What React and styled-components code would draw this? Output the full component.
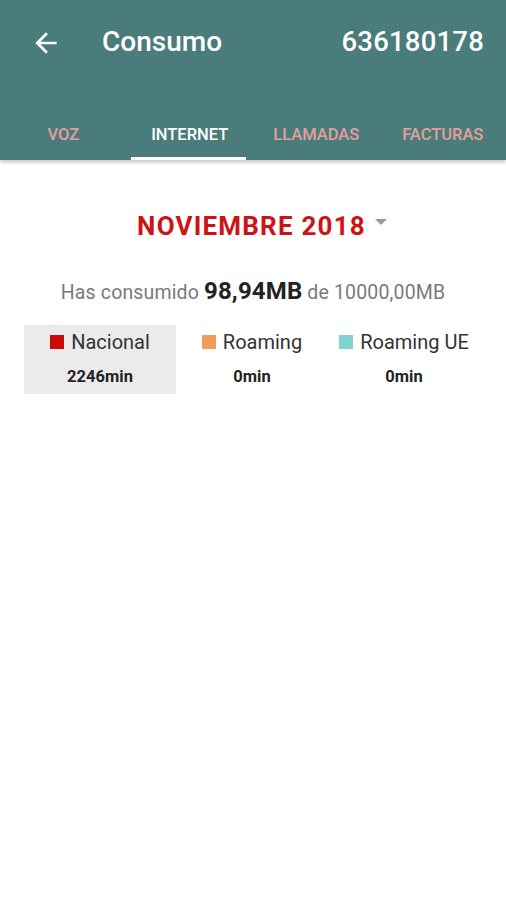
import React from 'react';
import styled, { createGlobalStyle } from 'styled-components';

const GlobalStyle = createGlobalStyle`
  html, body {
    margin: 0;
    padding: 0;
    background: #ffffff;
  }
  body {
    font-family: Roboto, "Noto Sans", "Liberation Sans", sans-serif;
  }
`;

const Screen = styled.div`
  width: 506px;
  min-height: 900px;
  background: #ffffff;
`;

const Header = styled.header`
  background: #4a7c7b;
  box-shadow: 0 2px 4px rgba(0, 0, 0, 0.25);
`;

const Toolbar = styled.div`
  height: 84px;
  display: flex;
  align-items: flex-start;
  padding: 26px 22px 0 30px;
  box-sizing: border-box;
  color: #ffffff;
`;

const BackButton = styled.button`
  width: 32px;
  height: 32px;
  margin-top: 1px;
  padding: 0;
  border: none;
  background: none;
  color: #ffffff;
  display: flex;
`;

const Title = styled.h1`
  margin: 0 0 0 40px;
  font-size: 28px;
  font-weight: 500;
  line-height: 32px;
  flex: 1;
`;

const Phone = styled.div`
  font-size: 27.5px;
  font-weight: 500;
  line-height: 32px;
  letter-spacing: 0.2px;
`;

const Tabs = styled.nav`
  display: grid;
  grid-template-columns: repeat(4, 1fr);
  height: 76px;
`;

const Tab = styled.div`
  position: relative;
  display: flex;
  align-items: center;
  justify-content: center;
  padding-top: 24px;
  font-size: 16.5px;
  font-weight: 500;
  color: ${(p) => (p.$active ? '#ffffff' : '#e2a09c')};

  &::after {
    content: '';
    display: ${(p) => (p.$active ? 'block' : 'none')};
    position: absolute;
    left: 4px;
    right: 7px;
    bottom: 0;
    height: 3px;
    background: #ffffff;
  }
`;

const Content = styled.main`
  padding: 50px 24px 0;
  display: flex;
  flex-direction: column;
  align-items: center;
`;

const Month = styled.div`
  display: flex;
  align-items: center;
  gap: 9px;
  margin-left: 18px;
  color: #cc1416;
  font-size: 26px;
  font-weight: 700;
  letter-spacing: 1.2px;
  line-height: 32px;
`;

const Caret = styled.span`
  width: 0;
  height: 0;
  margin-top: -8px;
  border-left: 6px solid transparent;
  border-right: 6px solid transparent;
  border-top: 6px solid #9a9a9a;
`;

const Summary = styled.p`
  margin: 34px 0 0;
  font-size: 19.5px;
  color: #7a7a7a;
  line-height: 30px;
  letter-spacing: 0.15px;

  strong {
    font-size: 24px;
    font-weight: 700;
    color: #222222;
  }
`;

const Legend = styled.div`
  margin-top: 17px;
  width: 100%;
  display: grid;
  grid-template-columns: repeat(3, 152px);
`;

const Cell = styled.div`
  height: 69px;
  background: ${(p) => (p.$selected ? '#ebebeb' : 'transparent')};
  display: flex;
  flex-direction: column;
  align-items: center;
  padding-top: 5px;
  box-sizing: border-box;
`;

const Label = styled.div`
  display: flex;
  align-items: center;
  gap: 7px;
  font-size: 20px;
  color: #333333;
  line-height: 24px;
`;

const Swatch = styled.span`
  width: 14px;
  height: 14px;
  background: ${(p) => p.$color};
`;

const Value = styled.div`
  margin-top: 13px;
  font-size: 16.5px;
  line-height: 19px;
  font-weight: 700;
  color: #222222;
`;

const ArrowBack = () => (
  <svg width="32" height="32" viewBox="0 0 24 24" fill="currentColor">
    <path d="M20 11H7.83l5.59-5.59L12 4l-8 8 8 8 1.41-1.41L7.83 13H20v-2z" />
  </svg>
);

const tabs = ['VOZ', 'INTERNET', 'LLAMADAS', 'FACTURAS'];

const legend = [
  { label: 'Nacional', color: '#cc0a0a', value: '2246min', selected: true },
  { label: 'Roaming', color: '#f29d55', value: '0min' },
  { label: 'Roaming UE', color: '#7fd4cc', value: '0min' },
];

const App = () => (
  <Screen>
    <GlobalStyle />
    <Header>
      <Toolbar>
        <BackButton aria-label="Atrás">
          <ArrowBack />
        </BackButton>
        <Title>Consumo</Title>
        <Phone>636180178</Phone>
      </Toolbar>
      <Tabs>
        {tabs.map((t) => (
          <Tab key={t} $active={t === 'INTERNET'}>
            {t}
          </Tab>
        ))}
      </Tabs>
    </Header>
    <Content>
      <Month>
        NOVIEMBRE 2018
        <Caret />
      </Month>
      <Summary>
        Has consumido <strong>98,94MB</strong> de 10000,00MB
      </Summary>
      <Legend>
        {legend.map((l) => (
          <Cell key={l.label} $selected={l.selected}>
            <Label>
              <Swatch $color={l.color} />
              {l.label}
            </Label>
            <Value>{l.value}</Value>
          </Cell>
        ))}
      </Legend>
    </Content>
  </Screen>
);

export default App;
